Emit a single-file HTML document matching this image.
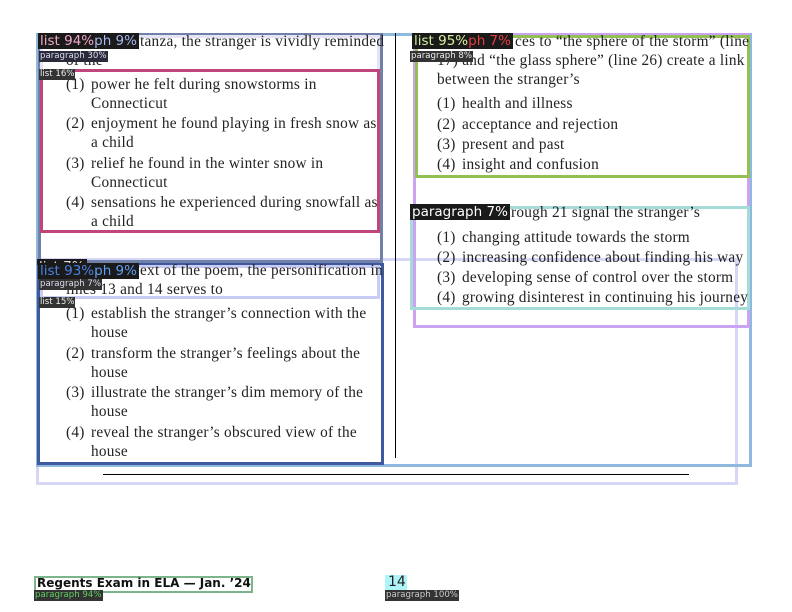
<!DOCTYPE html>
<html><head><meta charset="utf-8"><style>
html,body{margin:0;padding:0;background:#fff;width:792px;height:612px;overflow:hidden;position:relative}
.t{position:absolute;font-family:"Liberation Serif",serif;font-size:15.3px;letter-spacing:0.25px;color:#222;white-space:nowrap;line-height:18px}
.b{position:absolute;box-sizing:border-box}
.l{position:absolute;font-family:"DejaVu Sans","Liberation Sans",sans-serif;background:#1a1a1a;white-space:nowrap}
.big{font-size:13.5px;line-height:16px;padding:0 2px}
.sm{font-size:8.6px;line-height:11px;padding:0 1px;color:#ddd;background:#333}
</style></head><body>
<div class="b" style="left:36px;top:258px;width:702px;height:227px;border:3px solid #d6d6f6"></div>
<div class="b" style="left:36px;top:33px;width:716px;height:434px;border:3px solid #8fb8de"></div>
<div class="b" style="left:38px;top:33px;width:345px;height:230px;border:3px solid #7080a8"></div>
<div class="b" style="left:40px;top:35px;width:340px;height:37px;border:3px solid #e4e4f4"></div>
<div class="b" style="left:40px;top:69px;width:340px;height:164px;border:3px solid #c0457a"></div>
<div class="b" style="left:37px;top:263px;width:347px;height:202px;border:3px solid #3d5a9e"></div>
<div class="b" style="left:40px;top:265px;width:340px;height:34px;border:3px solid #c8ccf4"></div>
<div class="b" style="left:413px;top:33px;width:337px;height:295px;border:3px solid #caa4f2"></div>
<div class="b" style="left:415px;top:35px;width:335px;height:143px;border:3px solid #92c052"></div>
<div class="b" style="left:410px;top:206px;width:340px;height:104px;border:3px solid #a6dcd8"></div>
<div class="b" style="left:395px;top:33px;width:1px;height:425px;background:#000"></div>
<div class="b" style="left:103px;top:474px;width:586px;height:1px;background:#000"></div>

<div class="t" style="left:140px;top:33px">tanza, the stranger is vividly reminded</div>
<div class="t" style="left:66px;top:52px">of the</div>
<div class="t" style="left:66px;top:76px">(1)</div><div class="t" style="left:91px;top:76px">power he felt during snowstorms in</div>
<div class="t" style="left:91px;top:95px">Connecticut</div>
<div class="t" style="left:66px;top:115px">(2)</div><div class="t" style="left:91px;top:115px">enjoyment he found playing in fresh snow as</div>
<div class="t" style="left:91px;top:134px">a child</div>
<div class="t" style="left:66px;top:155px">(3)</div><div class="t" style="left:91px;top:155px">relief he found in the winter snow in</div>
<div class="t" style="left:91px;top:174px">Connecticut</div>
<div class="t" style="left:66px;top:194px">(4)</div><div class="t" style="left:91px;top:194px">sensations he experienced during snowfall as</div>
<div class="t" style="left:91px;top:213px">a child</div>

<div class="t" style="left:140px;top:262px">ext of the poem, the personification in</div>
<div class="t" style="left:66px;top:281px">lines 13 and 14 serves to</div>
<div class="t" style="left:66px;top:305px">(1)</div><div class="t" style="left:91px;top:305px">establish the stranger’s connection with the</div>
<div class="t" style="left:91px;top:324px">house</div>
<div class="t" style="left:66px;top:345px">(2)</div><div class="t" style="left:91px;top:345px">transform the stranger’s feelings about the</div>
<div class="t" style="left:91px;top:364px">house</div>
<div class="t" style="left:66px;top:384px">(3)</div><div class="t" style="left:91px;top:384px">illustrate the stranger’s dim memory of the</div>
<div class="t" style="left:91px;top:403px">house</div>
<div class="t" style="left:66px;top:424px">(4)</div><div class="t" style="left:91px;top:424px">reveal the stranger’s obscured view of the</div>
<div class="t" style="left:91px;top:443px">house</div>

<div class="t" style="left:515px;top:33px">ces to “the sphere of the storm” (line</div>
<div class="t" style="left:437px;top:52px">17) and “the glass sphere” (line 26) create a link</div>
<div class="t" style="left:437px;top:71px">between the stranger’s</div>
<div class="t" style="left:437px;top:95px">(1)</div><div class="t" style="left:462px;top:95px">health and illness</div>
<div class="t" style="left:437px;top:116px">(2)</div><div class="t" style="left:462px;top:116px">acceptance and rejection</div>
<div class="t" style="left:437px;top:136px">(3)</div><div class="t" style="left:462px;top:136px">present and past</div>
<div class="t" style="left:437px;top:156px">(4)</div><div class="t" style="left:462px;top:156px">insight and confusion</div>

<div class="t" style="left:511px;top:204px">rough 21 signal the stranger’s</div>
<div class="t" style="left:437px;top:229px">(1)</div><div class="t" style="left:462px;top:229px">changing attitude towards the storm</div>
<div class="t" style="left:437px;top:249px">(2)</div><div class="t" style="left:462px;top:249px">increasing confidence about finding his way</div>
<div class="t" style="left:437px;top:269px">(3)</div><div class="t" style="left:462px;top:269px">developing sense of control over the storm</div>
<div class="t" style="left:437px;top:289px">(4)</div><div class="t" style="left:462px;top:289px">growing disinterest in continuing his journey</div>

<div class="l big" style="left:38px;top:33px;color:#f2a8c8">list 94%<span style="color:#a8b8f0">ph 9%</span></div>
<div class="l sm" style="left:39px;top:51px;color:#dcdcf4;background:#2a2a3a">paragraph 30%</div>
<div class="l sm" style="left:39px;top:69px;color:#eee">list 16%</div>
<div class="l big" style="left:37px;top:259px;color:#ddd;height:6px;overflow:hidden">list 7%</div>
<div class="l big" style="left:38px;top:263px;color:#4a80e0">list 93%<span style="color:#60a0f0">ph 9%</span></div>
<div class="l sm" style="left:39px;top:279px;color:#dde">paragraph 7%</div>
<div class="l sm" style="left:39px;top:297px;color:#eee">list 15%</div>
<div class="l big" style="left:412px;top:33px;color:#d8f0a0">list 95%<span style="color:#e04040">ph 7%</span></div>
<div class="l sm" style="left:410px;top:51px;color:#eee">paragraph 8%</div>
<div class="l big" style="left:410px;top:204px;color:#fff">paragraph 7%</div>

<div class="b" style="left:34px;top:576px;width:219px;height:17px;border:2px solid #7cb48c"></div>
<div class="t" style="left:37px;top:576px;font-family:'DejaVu Sans','Liberation Sans',sans-serif;font-weight:bold;font-size:12px;letter-spacing:0;line-height:14px;color:#111">Regents Exam in ELA — Jan. ’24</div>
<div class="l sm" style="left:34px;top:590px;color:#60d060">paragraph 94%</div>
<div class="b" style="left:385px;top:575px;width:22px;height:15px;background:#aef4f8"></div>
<div class="t" style="left:388px;top:574px;font-family:'DejaVu Sans',sans-serif;font-size:14px;letter-spacing:0;line-height:16px">14</div>
<div class="l sm" style="left:385px;top:590px;color:#ccc">paragraph 100%</div>
</body></html>
